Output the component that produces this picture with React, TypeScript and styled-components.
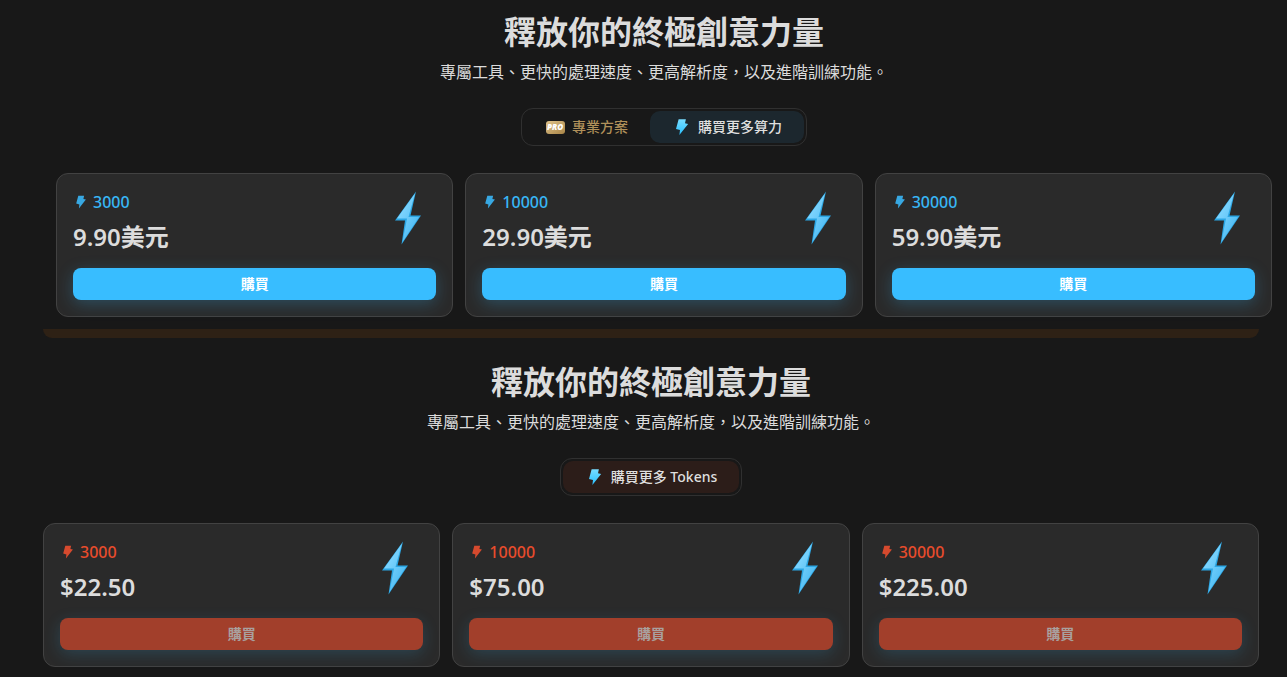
import React, { useId } from "react";
import styled, { createGlobalStyle } from "styled-components";

const GlobalStyle = createGlobalStyle`
  *, *::before, *::after { box-sizing: border-box; }
  body {
    margin: 0;
    background: #181818;
    color: #dcdcdc;
    font-family: "Noto Sans", "Noto Sans CJK TC", sans-serif;
    font-size: 16px;
  }
  h1, h2, p { margin: 0; }
  button { font-family: inherit; cursor: pointer; }
`;

const Page = styled.main`
  display: flex;
  flex-direction: column;
`;

const Section = styled.section<{ $inset: string }>`
  display: flex;
  flex-direction: column;
  align-items: center;
  padding: ${(p) => p.$inset};
`;

const Title = styled.h2`
  font-family: "Noto Sans CJK TC", sans-serif;
  font-size: 32px;
  line-height: 40px;
  font-weight: 700;
  text-align: center;
`;

const Subtitle = styled.p`
  margin-top: 9px;
  font-family: "Noto Sans CJK TC", sans-serif;
  line-height: 24px;
  text-align: center;
`;

const Tabs = styled.div`
  display: flex;
  margin: 25px 0 27px;
  padding: 2px;
  border: 1px solid #303030;
  border-radius: 12px;
`;

type Tone = "plain" | "blue" | "red";
const tabTones: Record<Tone, { bg: string; fg: string }> = {
  plain: { bg: "transparent", fg: "#b0905a" },
  blue: { bg: "#1c272e", fg: "#dfdfdf" },
  red: { bg: "#2c1d19", fg: "#dfdfdf" },
};

const Tab = styled.button<{ $tone: Tone }>`
  display: flex;
  align-items: center;
  gap: 6px;
  height: 32px;
  padding: 0 22px;
  border: 0;
  border-radius: 10px;
  background: ${(p) => tabTones[p.$tone].bg};
  color: ${(p) => tabTones[p.$tone].fg};
  font-size: 14px;
  font-weight: 500;
  line-height: 20px;
`;

const Cards = styled.div`
  align-self: stretch;
  display: grid;
  grid-template-columns: repeat(3, 1fr);
  gap: 12px;
`;

const Card = styled.article`
  display: flex;
  flex-direction: column;
  padding: 16px;
  border: 1px solid #424242;
  border-radius: 12px;
  background: #2a2a2a;
`;

const CardTop = styled.div`
  display: flex;
  justify-content: space-between;
  align-items: flex-start;
`;

const Amount = styled.p<{ $color: string }>`
  display: flex;
  align-items: center;
  gap: 4px;
  color: ${(p) => p.$color};
  font-weight: 500;
  line-height: 24px;
`;

const Price = styled.p`
  margin-top: 7px;
  font-size: 24px;
  font-weight: 600;
  line-height: 32px;
`;

const BuyButton = styled.button`
  height: 32px;
  margin-top: 15px;
  border: 0;
  border-radius: 8px;
  background: #38bdff;
  color: #fff;
  font-size: 14px;
  font-weight: 700;
  line-height: 20px;
  box-shadow: 0 4px 16px rgba(56, 189, 255, 0.25);

  &:disabled {
    background: #a23f2b;
    color: #a9a09e;
    box-shadow: 0 4px 16px rgba(56, 189, 255, 0.18);
    cursor: default;
  }
`;

const Strip = styled.div`
  height: 9px;
  margin: 12px 28px 12px 43px;
  border-radius: 0 0 12px 12px;
  background: #2e2115;
`;

function SmallBolt({ size, fill }: { size: number; fill?: string }) {
  const id = useId();
  return (
    <svg width={size} height={size} viewBox="0 0 16 16" aria-hidden="true">
      <defs>
        <linearGradient id={id} x1="0" y1="0" x2="0" y2="1">
          <stop offset="0" stopColor="#78dcff" />
          <stop offset="1" stopColor="#28c0ff" />
        </linearGradient>
      </defs>
      <path
        d="M5.3 1.7H11.1L10.4 5L12.9 5.6L5.9 14.4L6.4 10.4L3.2 9.6Z"
        fill={fill ?? `url(#${id})`}
      />
    </svg>
  );
}

function LargeBolt() {
  const id = useId();
  return (
    <svg width="56" height="56" viewBox="0 0 56 56" aria-hidden="true">
      <defs>
        <linearGradient id={id} x1="0.2" y1="0.2" x2="0.8" y2="0.9">
          <stop offset="0" stopColor="#86d8ff" />
          <stop offset="1" stopColor="#48b9f2" />
        </linearGradient>
      </defs>
      <path d="M36 1.5L15 30.5H25L21.5 54.5L41 25.500H30.500Z" fill="#2ba6e4" />
      <path d="M35 3.500L17 28.500H27L22.500 52L39 27H28.500Z" fill={`url(#${id})`} />
    </svg>
  );
}

const BadgeText = styled.text`
  font-family: "Open Sans", sans-serif;
  font-size: 8px;
  font-weight: 800;
  font-style: italic;
  fill: #fff;
`;

function ProBadge() {
  const id = useId();
  return (
    <svg width="20" height="16" viewBox="0 0 20 16" aria-hidden="true">
      <defs>
        <linearGradient id={id} x1="0" y1="0" x2="1" y2="1">
          <stop offset="0" stopColor="#e0c48c" />
          <stop offset="1" stopColor="#a88446" />
        </linearGradient>
      </defs>
      <rect x="0" y="2" width="19" height="13" rx="3" fill={`url(#${id})`} />
      <BadgeText x="9" y="11" textAnchor="middle">PRO</BadgeText>
    </svg>
  );
}

type Plan = { amount: string; price: string };
type Accent = { text: string; icon: string };

function Plans({ items, accent, disabled }: { items: Plan[]; accent: Accent; disabled?: boolean }) {
  return (
    <Cards>
      {items.map((plan) => (
        <Card key={plan.amount}>
          <CardTop>
            <div>
              <Amount $color={accent.text}>
                <SmallBolt size={16} fill={accent.icon} />
                {plan.amount}
              </Amount>
              <Price>{plan.price}</Price>
            </div>
            <LargeBolt />
          </CardTop>
          <BuyButton disabled={disabled}>購買</BuyButton>
        </Card>
      ))}
    </Cards>
  );
}

const Heading = () => (
  <>
    <Title>釋放你的終極創意力量</Title>
    <Subtitle>專屬工具、更快的處理速度、更高解析度，以及進階訓練功能。</Subtitle>
  </>
);

const usdPlans: Plan[] = [
  { amount: "3000", price: "9.90美元" },
  { amount: "10000", price: "29.90美元" },
  { amount: "30000", price: "59.90美元" },
];

const tokenPlans: Plan[] = [
  { amount: "3000", price: "$22.50" },
  { amount: "10000", price: "$75.00" },
  { amount: "30000", price: "$225.00" },
];

const blue: Accent = { text: "#38b6f5", icon: "#38a8e2" };
const red: Accent = { text: "#e84c2c", icon: "#d64a2e" };

export default function App() {
  return (
    <Page>
      <GlobalStyle />
      <Section $inset="10px 15px 0 56px">
        <Heading />
        <Tabs>
          <Tab $tone="plain">
            <ProBadge />
            專業方案
          </Tab>
          <Tab $tone="blue">
            <SmallBolt size={20} />
            購買更多算力
          </Tab>
        </Tabs>
        <Plans items={usdPlans} accent={blue} />
      </Section>
      <Strip />
      <Section $inset="10px 28px 10px 43px">
        <Heading />
        <Tabs>
          <Tab $tone="red">
            <SmallBolt size={20} />
            購買更多 Tokens
          </Tab>
        </Tabs>
        <Plans items={tokenPlans} accent={red} disabled />
      </Section>
    </Page>
  );
}
